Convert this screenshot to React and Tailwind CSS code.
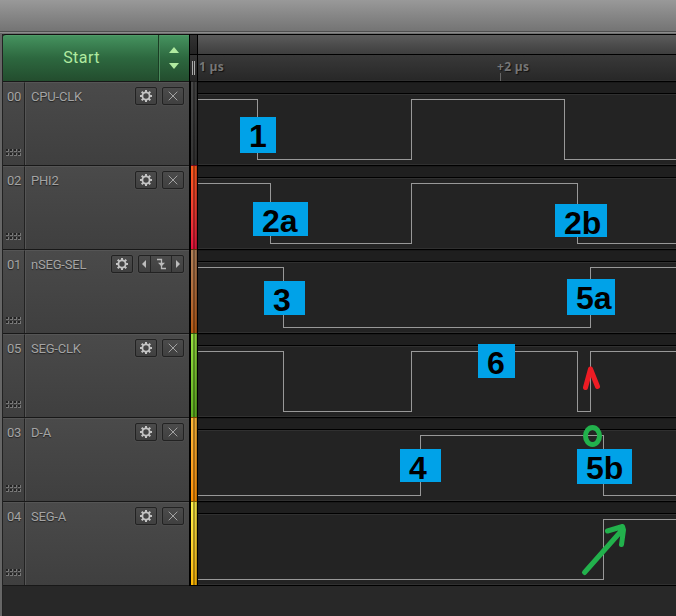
import React from "react";

const CHANNELS = [
  { id: "00", name: "CPU-CLK", strip: "from-[#484848] to-[#343434]", d: "M0 17.5H59.5V77.5H213.5V17.5H366.5V77.5H478" },
  { id: "02", name: "PHI2", strip: "from-[#ff5a1a] to-[#e8103c]", d: "M0 17.5H72.5V77.5H213.5V17.5H379.5V77.5H478" },
  { id: "01", name: "nSEG-SEL", strip: "from-[#b08058] to-[#b85a10]", d: "M0 17.5H85.5V77.5H392.5V17.5H478", trigger: true },
  { id: "05", name: "SEG-CLK", strip: "from-[#98e040] to-[#5fb020]", d: "M0 17.5H85.5V77.5H213.5V17.5H379.5V77.5H392.5V17.5H478" },
  { id: "03", name: "D-A", strip: "from-[#ffb938] to-[#ff9000]", d: "M0 77.5H222.5V17.5H405.5V77.5H478" },
  { id: "04", name: "SEG-A", strip: "from-[#fff048] to-[#ffb800]", d: "M0 77.5H405.5V17.5H478" },
];

function Gear() {
  return (
    <svg width="14" height="14" viewBox="-7 -7 14 14" className="block">
      <g stroke="#c4c4c4" strokeWidth="2">
        <path d="M0 -6V-3.5M0 6V3.5M-6 0H-3.5M6 0H3.5M-4.3 -4.3L-2.7 -2.7M4.3 4.3L2.7 2.7M-4.3 4.3L-2.7 2.7M4.3 -4.3L2.7 -2.7" />
      </g>
      <circle r="3.6" fill="none" stroke="#c4c4c4" strokeWidth="1.8" />
    </svg>
  );
}

function Cross() {
  return (
    <svg width="10" height="10" viewBox="0 0 10 10" className="block">
      <path d="M.7 .7L9.3 9.3M9.3 .7L.7 9.3" stroke="#a2a2a2" strokeWidth="1" />
    </svg>
  );
}

const BTN =
  "flex h-[18px] items-center justify-center rounded-[2px] border border-[#222] bg-linear-to-b from-[#4b4b4b] to-[#404040] shadow-[0_0_0_1px_#4c4c4c]";

function Buttons({ trigger }) {
  if (!trigger) {
    return (
      <div className="mr-[5px] mt-[4px] flex gap-[5px]">
        <div className={BTN + " w-[22px]"}><Gear /></div>
        <div className={BTN + " w-[22px]"}><Cross /></div>
      </div>
    );
  }
  return (
    <div className="mr-[5px] mt-[4px] flex gap-[5px]">
      <div className={BTN + " w-[22px]"}><Gear /></div>
      <div className={BTN + " w-[46px]"}>
        <svg width="44" height="16" viewBox="0 0 44 16" className="block">
          <path d="M11.5 0V16M32.5 0V16" stroke="#262626" />
          <path d="M7 4V12L3 8ZM37 4V12L41 8Z" fill="#bcbcbc" />
          <path d="M18 3.5H22.5V12.5H27" fill="none" stroke="#bcbcbc" strokeWidth="1.3" />
          <path d="M19 6.7H26L22.5 10.5Z" fill="#bcbcbc" />
        </svg>
      </div>
    </div>
  );
}

function Grip() {
  return (
    <svg width="16" height="8" viewBox="0 0 16 8" shapeRendering="crispEdges" className="mb-[8px] ml-[3px] block">
      {[0, 4, 8, 12].map((x) =>
        [0, 4].map((y) => (
          <g key={x + "-" + y}>
            <rect x={x} y={y} width="2" height="2" fill="#222" />
            <rect x={x + 2} y={y} width="1" height="3" fill="#777" />
            <rect x={x} y={y + 2} width="3" height="1" fill="#777" />
          </g>
        ))
      )}
    </svg>
  );
}

function Channel({ c }) {
  return (
    <div className="flex h-[84px] border-t border-[#181818]">
      <div className="flex w-[22px] flex-col justify-between border-r border-t border-r-[#222] border-t-[#555] bg-linear-to-b from-[#4a4a4a] to-[#3f3f3f]">
        <span className="ml-[4px] mt-[6px] text-[13px] leading-4 tracking-[-0.4px] text-[#a4a4a4] [text-shadow:0_1px_1px_#222]">{c.id}</span>
        <Grip />
      </div>
      <div className="flex w-[164px] items-start justify-between border-l border-t border-[#555] bg-linear-to-b from-[#4a4a4a] to-[#3f3f3f]">
        <span className="ml-[5px] mt-[6px] text-[13px] leading-4 tracking-[-0.2px] text-[#a4a4a4] [text-shadow:0_1px_1px_#222]">{c.name}</span>
        <Buttons trigger={c.trigger} />
      </div>
    </div>
  );
}

function Strip({ c }) {
  return (
    <div className={"flex h-[84px] w-[6px] border-t border-black/50 bg-linear-to-b " + c.strip}>
      <div className="w-[2px]" />
      <div className="w-[2px] bg-black/35" />
      <div className="w-px bg-black/10" />
      <div className="w-px bg-black/25" />
    </div>
  );
}

function Wave({ c }) {
  return (
    <div className="flex h-[84px] flex-col border-t border-black">
      <div className="h-[12px] border-b border-t border-b-black border-t-[#191919] bg-[#1f1f1f]" />
      <div className="h-[71px] border-b border-t border-[#303030] bg-[#232323]">
        <svg width="478" height="69" viewBox="0 13 478 69" className="block">
          <path d={c.d} fill="none" stroke="#989898" shapeRendering="crispEdges" />
        </svg>
      </div>
    </div>
  );
}

const TAG = "absolute bg-[#00a2e8] text-[32px] font-bold leading-[38px] text-black whitespace-nowrap";

export default function App() {
  return (
    <div className="relative flex h-[616px] w-[676px] flex-col overflow-hidden bg-[#282828] font-['Roboto','Liberation_Sans',sans-serif]">
      <div className="h-[31px] bg-linear-to-b from-[#999] to-[#747474]" />
      <div className="h-px bg-[#505050]" />
      <div className="h-px bg-[#8b8b8b]" />
      <div className="h-px bg-[#707070]" />
      <div className="flex grow">
        <div className="-mt-px w-[2px] bg-[#666]" />
        <div className="w-px bg-[#222]" />
        <div className="w-[186px]">
          <div className="flex h-[47px] rounded-tl-[3px] border-t border-[#111] bg-linear-to-b from-[#469460] via-[#2d683f] to-[#234d2e] shadow-[inset_0_1px_0_#4f9a67]">
            <div className="flex w-[156px] items-center justify-center border-r border-[#1a3d24] pl-[2px] text-[16px] tracking-[0.45px] text-[#b0eaa0]">Start</div>
            <div className="flex w-[30px] flex-col items-center justify-center gap-[10px] border-l border-[#4a8a5b]">
              <svg width="10" height="6" viewBox="0 0 10 6" className="-ml-px"><path d="M0 6L5 0L10 6Z" fill="#b0eaa0" /></svg>
              <svg width="10" height="6" viewBox="0 0 10 6" className="-ml-px"><path d="M0 0L5 6L10 0Z" fill="#b0eaa0" /></svg>
            </div>
          </div>
          {CHANNELS.map((c) => <Channel key={c.id} c={c} />)}
          <div className="h-px bg-[#181818]" />
        </div>
        <div className="h-[552px] w-[9px] bg-black">
          <div className="mt-px ml-px h-[19px] w-[7px] bg-linear-to-b from-[#333] to-[#242424]" />
          <div className="mt-px ml-px flex h-[26px] w-[7px] items-center justify-center gap-px bg-linear-to-b from-[#333] to-[#252525]">
            <div className="h-[14px] w-px bg-[#aaa]" />
            <div className="h-[14px] w-px bg-[#aaa]" />
          </div>
          <div className="ml-[2px]">
            {CHANNELS.map((c) => <Strip key={c.id} c={c} />)}
          </div>
        </div>
        <div className="w-[478px]">
          <div className="h-[21px] border-b border-t border-black bg-linear-to-b from-[#5c5c5c] to-[#3e3e3e]" />
          <div className="relative h-[26px] border-b border-[#303030] bg-linear-to-b from-[#393939] to-[#282828] font-['Open_Sans'] text-[12px] font-bold leading-[23px] tracking-[0.3px] text-[#777] [text-shadow:1px_1px_1px_#111]">
            <span className="absolute left-[1px] top-0">1 µs</span>
            <span className="absolute left-[299px] top-0">+2 µs</span>
            <div className="absolute left-[302px] top-[18px] h-[8px] w-px bg-[#666]" />
          </div>
          {CHANNELS.map((c) => <Wave key={c.id} c={c} />)}
          <div className="h-px bg-black" />
        </div>
      </div>

      <div className="absolute inset-0 font-['Liberation_Sans',Arial,sans-serif]">
        <div className={TAG + " left-[240px] top-[117px] h-[36px] w-[36px] pl-[9px]"}>1</div>
        <div className={TAG + " left-[253px] top-[202px] h-[34px] w-[55px] pl-[9px]"}>2a</div>
        <div className={TAG + " left-[555px] top-[204px] h-[33px] w-[52px] pl-[9px]"}>2b</div>
        <div className={TAG + " left-[264px] top-[281px] h-[34px] w-[41px] pl-[9px]"}>3</div>
        <div className={TAG + " left-[567px] top-[279px] h-[36px] w-[48px] pl-[9px]"}>5a</div>
        <div className={TAG + " left-[400px] top-[449px] h-[33px] w-[41px] pl-[9px]"}>4</div>
        <div className={TAG + " left-[577px] top-[449px] h-[35px] w-[55px] pl-[9px]"}>5b</div>
        <div className={TAG + " left-[478px] top-[344px] h-[34px] w-[37px] pl-[9px]"}>6</div>
        <svg width="676" height="616" viewBox="0 0 676 616" className="absolute inset-0" fill="none" strokeWidth="5" strokeLinecap="round" strokeLinejoin="round">
          <path d="M585.5 387.5L590.5 369L597.5 386.5" stroke="#ed1c24" />
          <ellipse cx="592.5" cy="436" rx="7" ry="8.5" stroke="#22b14c" />
          <path d="M584.5 572.5L623 529M607.5 531L622.5 526.5L623.5 530L621.5 544.5" stroke="#22b14c" />
        </svg>
      </div>
    </div>
  );
}
